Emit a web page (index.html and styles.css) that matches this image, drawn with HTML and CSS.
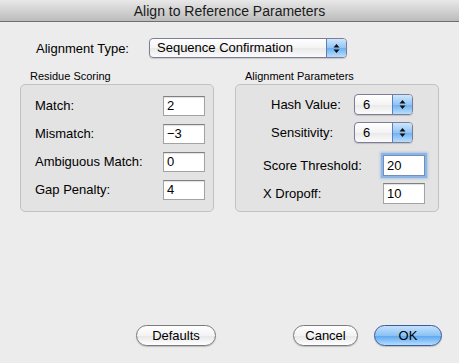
FILE: index.html
```html
<!DOCTYPE html>
<html lang="en">
<head>
    <meta charset="UTF-8">
    <title>Align to Reference Parameters</title>
    <link rel="stylesheet" href="styles.css">
</head>
<body>
    <div class="dialog">
        <div class="titlebar">Align to Reference Parameters</div>

        <div class="type-row">
            <span class="type-label">Alignment Type:</span>
            <div class="popup popup-type">
                <span class="popup-text">Sequence Confirmation</span>
                <span class="popup-arrows">
                    <svg width="7" height="11" viewBox="0 0 7 11"><path d="M3.5 1 L6.5 4.5 H0.5 Z M3.5 10 L6.5 6.5 H0.5 Z"/></svg>
                </span>
            </div>
        </div>

        <div class="groups">
            <div class="group group-left">
                <div class="group-title">Residue Scoring</div>
                <div class="group-box scoring">
                    <label>Match:</label>
                    <div class="field">2</div>
                    <label>Mismatch:</label>
                    <div class="field">&minus;3</div>
                    <label>Ambiguous Match:</label>
                    <div class="field">0</div>
                    <label>Gap Penalty:</label>
                    <div class="field">4</div>
                </div>
            </div>

            <div class="group group-right">
                <div class="group-title">Alignment Parameters</div>
                <div class="group-box params">
                    <div class="popup-rows">
                        <label>Hash Value:</label>
                        <div class="popup popup-small">
                            <span class="popup-text">6</span>
                            <span class="popup-arrows">
                                <svg width="7" height="11" viewBox="0 0 7 11"><path d="M3.5 1 L6.5 4.5 H0.5 Z M3.5 10 L6.5 6.5 H0.5 Z"/></svg>
                            </span>
                        </div>
                        <label>Sensitivity:</label>
                        <div class="popup popup-small">
                            <span class="popup-text">6</span>
                            <span class="popup-arrows">
                                <svg width="7" height="11" viewBox="0 0 7 11"><path d="M3.5 1 L6.5 4.5 H0.5 Z M3.5 10 L6.5 6.5 H0.5 Z"/></svg>
                            </span>
                        </div>
                    </div>
                    <div class="field-rows">
                        <label>Score Threshold:</label>
                        <div class="field field-tall focused">20</div>
                        <label>X Dropoff:</label>
                        <div class="field field-tall">10</div>
                    </div>
                </div>
            </div>
        </div>

        <div class="buttons">
            <button class="btn btn-defaults">Defaults</button>
            <span class="spacer"></span>
            <button class="btn btn-cancel">Cancel</button>
            <button class="btn btn-ok">OK</button>
        </div>
    </div>
</body>
</html>
```

FILE: styles.css
```css
body {
    margin: 0;
    padding: 0;
    background-color: #ececec;
    font-family: "Liberation Sans", Arial, sans-serif;
    font-size: 13px;
    color: #000000;
}

.dialog {
    width: 459px;
    height: 363px;
    display: flex;
    flex-direction: column;
}

.titlebar {
    height: 21px;
    line-height: 22px;
    font-size: 14px;
    text-align: center;
    color: #1a1a1a;
    background: linear-gradient(#e8e8e8, #d2d2d2 50%, #bcbcbc);
    border-bottom: 1px solid #6e6e6e;
}

/* alignment type row */
.type-row {
    display: flex;
    align-items: center;
    margin-top: 16px;
    padding-left: 36px;
    height: 20px;
}

.type-label {
    width: 113px;
}

.popup {
    display: flex;
    box-sizing: border-box;
    border: 1px solid #8c8c8c;
    border-radius: 4px;
    background: linear-gradient(#ffffff, #f4f4f4 50%, #e9e9e9 51%, #fbfbfb);
    box-shadow: 0 1px 1px rgba(0, 0, 0, 0.15);
    overflow: hidden;
}

.popup-text {
    flex: 1;
    padding-left: 7px;
    line-height: 18px;
}

.popup-arrows {
    width: 19px;
    display: flex;
    align-items: center;
    justify-content: center;
    background: linear-gradient(#cfe6fc, #92c4f4 50%, #6daff0 51%, #b9defc);
    border-left: 1px solid #5b80c0;
}

.popup-arrows svg {
    fill: #111111;
}

.popup-type {
    width: 198px;
    height: 20px;
    border-color: #7d7d9a;
}

.popup-small {
    width: 59px;
    height: 21px;
    border-color: #7d7d9a;
}

.popup-small .popup-text {
    padding-left: 8px;
    line-height: 19px;
}

/* groups */
.groups {
    display: flex;
    gap: 21px;
    margin-top: 12px;
    padding-left: 20px;
}

.group-title {
    font-size: 11px;
    line-height: 13px;
    height: 14px;
    padding-left: 10px;
}

.group-box {
    box-sizing: border-box;
    height: 128px;
    border: 1px solid #c2c2c2;
    border-radius: 5px;
    background-color: #e3e3e3;
}

.group-left .group-box {
    width: 194px;
}

.group-right .group-box {
    width: 204px;
}

label {
    line-height: 20px;
}

.scoring {
    display: grid;
    grid-template-columns: 128px 42px;
    grid-auto-rows: 20px;
    row-gap: 8px;
    padding: 11px 0 0 14px;
    align-items: center;
}

.field {
    box-sizing: border-box;
    height: 20px;
    padding-left: 3px;
    line-height: 18px;
    background-color: #ffffff;
    border: 1px solid #a3a3a3;
    border-top-color: #7f7f7f;
    box-shadow: inset 0 1px 1px rgba(0, 0, 0, 0.12);
}

.field-tall {
    height: 21px;
    line-height: 19px;
}

.focused {
    box-shadow: 0 0 0 2px #8cb6e6, 0 0 2px 3px rgba(120, 165, 220, 0.45);
    border-color: #6f8fbf;
}

.params {
    padding-top: 9px;
}

.popup-rows {
    display: grid;
    grid-template-columns: 83px 59px;
    grid-auto-rows: 21px;
    row-gap: 7px;
    padding-left: 35px;
    align-items: center;
}

.field-rows {
    display: grid;
    grid-template-columns: 120px 42px;
    grid-auto-rows: 21px;
    row-gap: 7px;
    margin-top: 12px;
    padding-left: 27px;
    align-items: center;
}

/* bottom buttons */
.buttons {
    display: flex;
    align-items: center;
    margin-top: auto;
    margin-bottom: 17px;
    padding: 0 17px 0 136px;
    gap: 16px;
}

.spacer {
    flex: 1;
}

.btn {
    box-sizing: border-box;
    height: 21px;
    padding: 0;
    font-family: "Liberation Sans", Arial, sans-serif;
    font-size: 13px;
    color: #000000;
    border: 1px solid #7a7a7a;
    border-radius: 11px;
    background: linear-gradient(#ffffff, #f3f3f3 50%, #e6e6e6 51%, #ffffff);
    box-shadow: 0 1px 1px rgba(0, 0, 0, 0.2);
}

.btn-defaults {
    width: 80px;
}

.btn-cancel {
    width: 65px;
}

.btn-ok {
    width: 68px;
    border-color: #3c5d9c;
    background: linear-gradient(#c4e1fd, #8bc2f5 50%, #5aa5ef 51%, #b2dcfd);
}
```
